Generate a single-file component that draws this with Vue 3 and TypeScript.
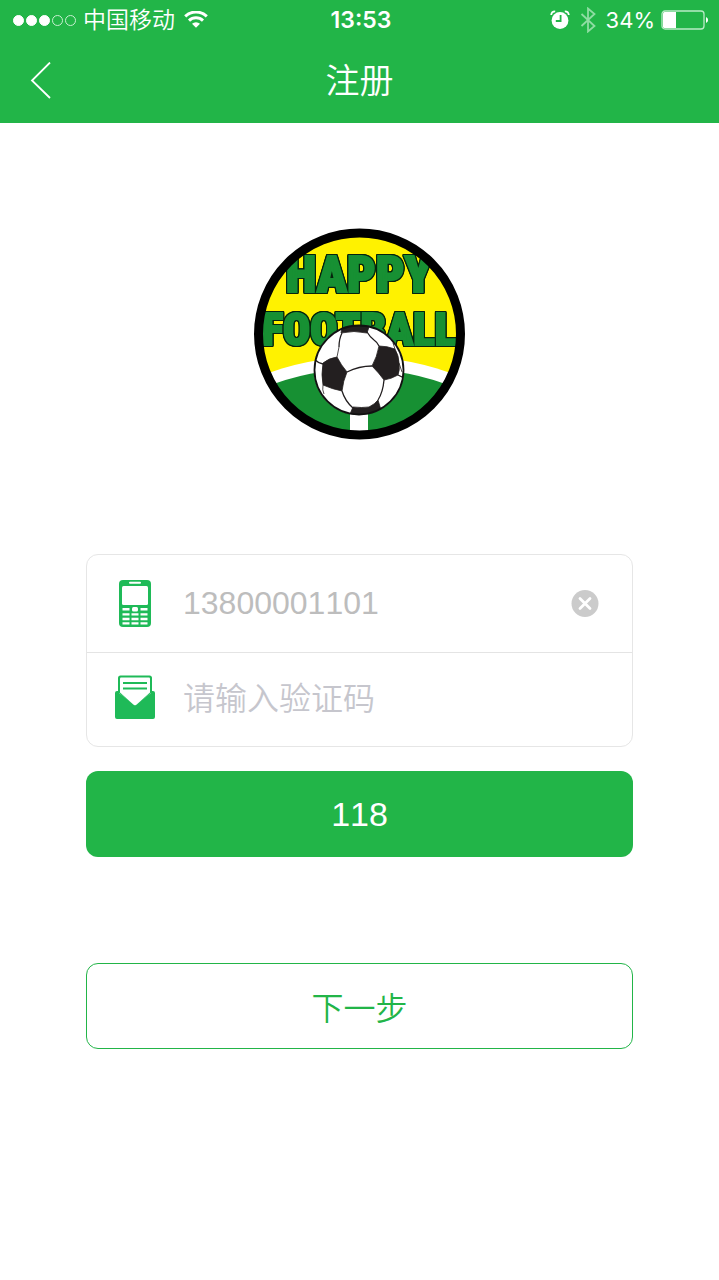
<script setup lang="ts">
import { ref } from 'vue'

const phone = ref<string>('13800001101')
const code = ref<string>('')
const seconds = ref<number>(118)
const signal: boolean[] = [true, true, true, false, false]

function clearPhone(): void {
  phone.value = ''
}
</script>

<template>
  <div class="page">
    <header class="header">
      <div class="status">
        <div class="status-left">
          <span class="dots">
            <i v-for="(on, i) in signal" :key="i" class="dot" :class="{ on }"></i>
          </span>
          <span class="carrier">中国移动</span>
          <svg class="wifi" viewBox="0 0 24 18" width="24" height="18" aria-hidden="true">
            <g fill="none" stroke="#fff" stroke-width="3">
              <path d="M1.200 5.400a15.600 15.600 0 0 1 21.600 0" />
              <path d="M5 9.600a10.200 10.200 0 0 1 14 0" />
            </g>
            <path d="M12 16.800l-4-4a6 6 0 0 1 8 0z" fill="#fff" />
          </svg>
        </div>
        <span class="clock">13:53</span>
        <div class="status-right">
          <svg viewBox="0 0 20 20" width="20" height="20" aria-hidden="true">
            <circle cx="10" cy="10.500" r="8.400" fill="#fff" />
            <path d="M1.200 5a4 4 0 0 1 4-3.600M18.800 5a4 4 0 0 0-4-3.600" fill="none" stroke="#fff" stroke-width="1.800" />
            <path d="M10.600 5v6H5.800" fill="none" stroke="#22b548" stroke-width="1.800" />
          </svg>
          <svg class="bluetooth" viewBox="0 0 16 26" width="16" height="26" aria-hidden="true">
            <path d="M1.500 7l13 12L8 24.500v-23L14.500 7l-13 12" fill="none" stroke="#8fdda3" stroke-width="1.800" />
          </svg>
          <span class="percent">34%</span>
          <svg viewBox="0 0 48 20" width="48" height="20" aria-hidden="true">
            <rect x="1" y="1" width="42" height="18" rx="3" fill="none" stroke="#b9ebc5" stroke-width="1.300" />
            <path d="M3.500 2H15v16H3.500A1.500 1.500 0 0 1 2 16.500v-13A1.500 1.500 0 0 1 3.500 2z" fill="#fff" />
            <path d="M45 7a3.200 3.200 0 0 1 0 6z" fill="#fff" />
          </svg>
        </div>
      </div>
      <div class="nav">
        <button class="back" type="button" aria-label="返回">
          <svg viewBox="0 0 22 40" width="22" height="40" aria-hidden="true">
            <path d="M20 .5L2 18.500l18 17.500" fill="none" stroke="#fff" stroke-width="1.800" />
          </svg>
        </button>
        <h1>注册</h1>
      </div>
    </header>

    <main class="content">
      <svg class="logo" viewBox="0 0 212 212" width="212" height="212" role="img" aria-label="Happy Football">
        <defs>
          <clipPath id="field"><circle cx="105.500" cy="106" r="99" /></clipPath>
          <clipPath id="ball"><circle cx="105" cy="142" r="45" /></clipPath>
        </defs>
        <g clip-path="url(#field)">
          <rect width="212" height="212" fill="#fff200" />
          <circle cx="105.500" cy="393" r="264" fill="#fff" />
          <circle cx="105.500" cy="393" r="252" fill="#179033" />
          <rect x="96" y="180" width="18" height="30" fill="#fff" />
          <g class="logo-text">
            <text x="105" y="64" class="happy">HAPPY</text>
            <text x="105" y="117" class="football">FOOTBALL</text>
          </g>
        </g>
        <circle cx="105.500" cy="106" r="101" fill="none" stroke="#000" stroke-width="9" />
        <circle cx="105" cy="142" r="45" fill="#fff" />
        <g clip-path="url(#ball)">
          <g fill="#231f20" stroke="#231f20" stroke-width="0.800" stroke-linejoin="round">
            <path d="M69 135q6-5 14-6 4 8 10 15-4 9-5 19-10-2-19-6-2-10 0-22z" />
            <path d="M125 118q8 0 16 3 4 7 4 14 1 7-1 12-7 4-14 5-5-7-12-14 5-9 7-20z" />
            <path d="M87 105l2-10 15-3 12 4-3 9q-13-3-26 0z" />
            <path d="M99 179q9 1 16 0 6-3 9-7l3 10-15 8-16-4z" />
          </g>
          <g fill="none" stroke="#231f20" stroke-width="1.300">
            <path d="M88 105q-3 6-3 14M60 131q4 4 9 5M93 144q12-6 25-6M113 104q3 5 7 8 3 2 5 6M88 163q3 10 11 17M130 152q-1 12-6 20M144 147l6 3" />
            <path d="M85 119q-1 5-2 10M69 157q-1 5 1 9M145 135l3 9M141 121l-2-6" stroke-width="0.800" />
          </g>
        </g>
        <circle cx="105" cy="142" r="44.500" fill="none" stroke="#111" stroke-width="1.800" />
      </svg>

      <form class="form" @submit.prevent>
        <div class="card">
          <div class="row phone-row">
            <label class="icon" for="phone" aria-label="手机号">
              <svg viewBox="0 0 32 47" width="32" height="47" aria-hidden="true">
                <rect width="32" height="47" rx="4" fill="#1fba58" />
                <rect x="10" y="1.800" width="12" height="2" rx="1" fill="#fff" />
                <rect x="3" y="6" width="26" height="19" rx="1.500" fill="#fff" />
                <g fill="#fff">
                  <path d="M3.500 28h7v2.600h-7zM21.500 28h7v2.600h-7zM3.500 33.200h7v2.400h-7zM12.500 33.200h7v2.400h-7zM21.500 33.200h7v2.400h-7zM3.500 37.800h7v2.400h-7zM12.500 37.800h7v2.400h-7zM21.500 37.800h7v2.400h-7zM3.500 42.200h7v2.200h-7zM12.500 42.200h7v2.200h-7zM21.500 42.200h7v2.200h-7z" />
                  <rect x="13" y="27" width="6" height="4.500" rx="1.500" />
                </g>
              </svg>
            </label>
            <input id="phone" v-model="phone" type="tel" />
            <button class="clear" type="button" aria-label="清除" @click="clearPhone">
              <svg viewBox="0 0 28 28" width="28" height="28" aria-hidden="true">
                <circle cx="14" cy="13.500" r="13.500" fill="#cbcbcb" />
                <path d="M9 8.500l10 10M19 8.500l-10 10" stroke="#fff" stroke-width="2.800" stroke-linecap="round" />
              </svg>
            </button>
          </div>
          <div class="row code-row">
            <label class="icon" for="code" aria-label="验证码">
              <svg viewBox="0 0 40 50" width="40" height="50" aria-hidden="true">
                <path d="M0 18q0-2 2-2h2v2l16 12.500L36 18v-2h2q2 0 2 2v24q0 2-2 2H2q-2 0-2-2z" fill="#1fba58" />
                <path d="M3 17V3Q3 .5 5.500 .5h29Q37 .5 37 3v14L22 30q-2 1.500-4 0z" fill="#1fba58" />
                <path d="M5 17.500V3.500q0-1 1-1h28q1 0 1 1v14L22 29.300q-2 1.700-4 0z" fill="#fff" />
                <path d="M8 8h24M8 13.500h24" stroke="#1fba58" stroke-width="2" />
              </svg>
            </label>
            <input id="code" v-model="code" type="text" placeholder="请输入验证码" />
          </div>
        </div>
        <button class="btn timer" type="button">{{ seconds }}</button>
        <button class="btn next" type="submit">下一步</button>
      </form>
    </main>
  </div>
</template>

<style>
body {
  background: #fff;
}
</style>

<style scoped>
.page {
  min-height: 100vh;
  background: #fff;
  font-family: "Liberation Sans", "Noto Sans CJK SC", sans-serif;
  font-weight: 350;
  font-kerning: none;
}
.page * {
  box-sizing: border-box;
}
.header {
  background: #22b548;
  color: #fff;
}
.status {
  height: 40px;
  padding: 0 10px 0 13px;
  display: grid;
  grid-template-columns: 1fr auto 1fr;
  align-items: center;
}
.status-left,
.status-right {
  display: flex;
  align-items: center;
}
.status-right {
  justify-content: flex-end;
}
.dots {
  display: flex;
  gap: 2px;
  margin-right: 7px;
}
.dot {
  width: 11px;
  height: 11px;
  border: 1px solid #c8f0d1;
  border-radius: 50%;
}
.dot.on {
  background: #fff;
  border-color: #fff;
}
.carrier {
  font-size: 23px;
  line-height: 40px;
}
.wifi {
  margin-left: 9px;
}
.clock {
  font: 600 23px/40px Inter, sans-serif;
}
.bluetooth {
  margin: 0 10px;
}
.percent {
  font: 400 22px/40px Inter, sans-serif;
  margin-right: 6px;
}
.nav {
  height: 83px;
  padding: 0 30px;
  display: grid;
  grid-template-columns: 1fr auto 1fr;
  align-items: center;
}
.nav h1 {
  margin: 0;
  font-size: 34px;
  font-weight: inherit;
  line-height: 83px;
}
button {
  font-family: inherit;
  font-weight: inherit;
  font-kerning: inherit;
  cursor: pointer;
}
.back,
.clear {
  display: flex;
  padding: 0;
  border: 0;
  background: none;
}
.back {
  justify-self: start;
}
.content {
  padding: 105px 86px 0;
}
.logo {
  display: block;
  margin: 0 auto;
}
.logo-text {
  font-family: "Liberation Sans Narrow", "Roboto Condensed", "Open Sans Condensed", "Liberation Sans", sans-serif;
  font-weight: 900;
  font-kerning: normal;
  text-anchor: middle;
  fill: #179033;
  stroke: #179033;
  stroke-width: 2px;
  filter: drop-shadow(1px 0 0 #06240d) drop-shadow(-1px 0 0 #06240d) drop-shadow(0 1px 0 #06240d) drop-shadow(0 -1px 0 #06240d);
}
.happy {
  font-size: 50px;
}
.football {
  font-size: 45px;
}
.form {
  margin-top: 114px;
}
.card {
  border: 1px solid #e6e6e6;
  border-radius: 12px;
}
.row {
  display: flex;
  align-items: center;
  padding-right: 33px;
}
.phone-row {
  height: 98px;
  border-bottom: 1px solid #e4e4e4;
}
.code-row {
  height: 93px;
}
.icon {
  width: 96px;
  flex: none;
  display: flex;
  justify-content: center;
}
input {
  flex: 1;
  min-width: 0;
  height: 60px;
  padding: 0;
  border: 0;
  outline: 0;
  background: none;
  color: #bdbdbd;
  font-family: inherit;
  font-weight: inherit;
  font-kerning: inherit;
  font-size: 32px;
}
input::placeholder {
  color: #c6c6cd;
  opacity: 1;
}
.btn {
  display: block;
  width: 100%;
  height: 86px;
  padding: 0;
  border-radius: 12px;
}
.timer {
  margin-top: 24px;
  border: 0;
  background: #22b548;
  color: #fff;
  font-size: 34px;
}
.next {
  margin-top: 106px;
  border: 1px solid #22b548;
  background: #fff;
  color: #22b548;
  font-size: 32px;
}
</style>
